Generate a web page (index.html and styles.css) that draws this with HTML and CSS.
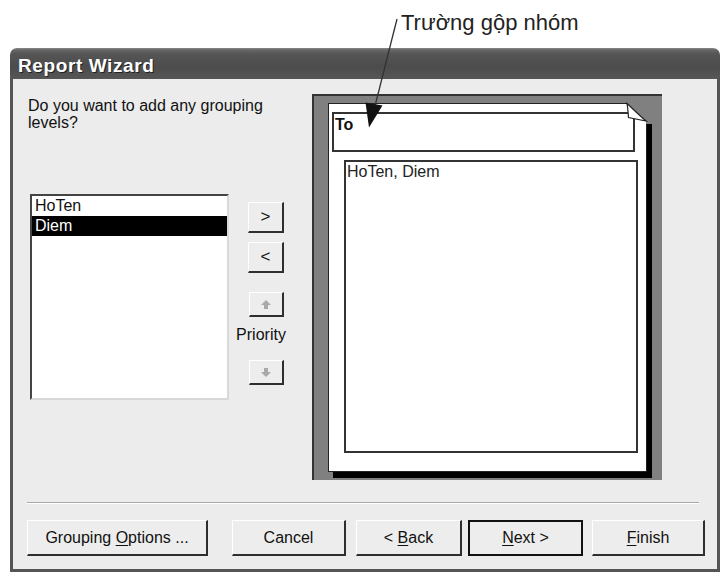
FILE: index.html
```html
<!DOCTYPE html>
<html>
<head>
<meta charset="utf-8">
<title>Report Wizard</title>
<link rel="stylesheet" href="styles.css">
</head>
<body>
<div class="top">
  <span class="callout">Trường gộp nhóm</span>
</div>
<svg class="arrow" viewBox="0 0 724 140" width="724" height="140">
  <line x1="397" y1="19" x2="375" y2="106" stroke="#333" stroke-width="1.3"/>
  <polygon points="365.5,102.5 382.5,105.5 369,127.5" fill="#111"/>
</svg>
<div class="window">
  <div class="titlebar">Report Wizard</div>
  <div class="body">
    <div class="main">
      <div class="left">
        <p class="question">Do you want to add any grouping levels?</p>
        <div class="pick">
          <div class="list">
            <div class="item">HoTen</div>
            <div class="item sel">Diem</div>
          </div>
          <div class="movers">
            <div class="btn mv"><span>&gt;</span></div>
            <div class="btn mv mv2"><span>&lt;</span></div>
            <div class="btn pr">
              <svg width="10" height="9" viewBox="0 0 10 9"><polygon points="5,0 10,5 7,5 7,9 3,9 3,5 0,5" fill="#a9a9a9"/></svg>
            </div>
            <div class="prio">Priority</div>
            <div class="btn pr pr2">
              <svg width="10" height="9" viewBox="0 0 10 9"><polygon points="5,9 10,4 7,4 7,0 3,0 3,4 0,4" fill="#a9a9a9"/></svg>
            </div>
          </div>
        </div>
      </div>
      <div class="preview">
        <div class="page">
          <div class="grp">To</div>
          <div class="detail">HoTen, Diem</div>
          <svg class="ear" width="31" height="24" viewBox="0 0 31 24">
            <polygon points="4,0 31,0 31,23 23,23 23,20 4,2.5" fill="#808080"/>
            <path d="M4,2.5 C5,7 5,12 5.5,16.5 L23,20 C16,14 9,7 4,2.5 Z" fill="#fff" stroke="#222" stroke-width="1.2"/>
          </svg>
        </div>
      </div>
    </div>
    <div class="sep"></div>
    <div class="actions">
      <div class="btn ab b-group"><span>Grouping <u>O</u>ptions ...</span></div>
      <div class="btn ab b-cancel"><span>Cancel</span></div>
      <div class="btn ab b-back"><span>&lt; <u>B</u>ack</span></div>
      <div class="btn ab b-next"><span><u>N</u>ext &gt;</span></div>
      <div class="btn ab b-finish"><span><u>F</u>inish</span></div>
    </div>
  </div>
</div>
</body>
</html>
```
FILE: styles.css
```css
html, body {
  margin: 0;
  padding: 0;
}
body {
  width: 724px;
  height: 580px;
  position: relative;
  overflow: hidden;
  background: #fff;
  font-family: "Liberation Sans", Arial, sans-serif;
  color: #111;
}
.top {
  height: 48px;
  box-sizing: border-box;
  padding: 10px 0 0 401px;
}
.callout {
  display: block;
  font-size: 22px;
  line-height: 26px;
  color: #222;
  white-space: nowrap;
}
.arrow {
  position: absolute;
  left: 0;
  top: 0;
  pointer-events: none;
  z-index: 5;
}
.window {
  margin-left: 10px;
  width: 710px;
}
.titlebar {
  height: 31px;
  box-sizing: border-box;
  border-radius: 7px 7px 0 0;
  background: linear-gradient(#8a8a8a 0, #666 2px, #555 6px, #4c4c4c 60%, #565656 100%);
  color: #fff;
  font-weight: bold;
  font-size: 19px;
  letter-spacing: 0.6px;
  line-height: 26px;
  padding: 5px 0 0 8px;
  text-shadow: 1px 1px 0 #222;
}
.body {
  height: 493px;
  box-sizing: border-box;
  border: 3px solid #555;
  border-top: 0;
  background: #ececec;
}
.main {
  display: flex;
  height: 401px;
  box-sizing: border-box;
  padding: 15px 0 0 15px;
}
.left {
  width: 284px;
}
.question {
  margin: 3px 0 0;
  width: 250px;
  font-size: 16px;
  line-height: 17px;
}
.pick {
  display: flex;
  margin-top: 63px;
}
.list {
  margin-left: 2px;
  width: 199px;
  height: 206px;
  box-sizing: border-box;
  background: #fff;
  border: 2px solid;
  border-color: #444 #d8d8d8 #d8d8d8 #444;
  font-size: 16px;
  line-height: 20px;
}
.item {
  padding-left: 3px;
}
.sel {
  background: #000;
  color: #fff;
}
.movers {
  margin-left: 7px;
  width: 60px;
  display: flex;
  flex-direction: column;
  align-items: center;
  padding-top: 8px;
}
.btn {
  box-sizing: border-box;
  background: #ededed;
  border-style: solid;
  border-width: 1px 2px 2px 1px;
  border-color: #fff #2e2e2e #2e2e2e #fff;
  display: flex;
  align-items: center;
  justify-content: center;
  color: #111;
  font-size: 16px;
  white-space: nowrap;
}
.mv {
  width: 36px;
  height: 31px;
  font-size: 17px;
}
.mv2 {
  margin-top: 9px;
}
.pr {
  width: 35px;
  height: 25px;
  margin-top: 19px;
}
.pr2 {
  margin-top: 17px;
}
.prio {
  margin-top: 9px;
  margin-right: 10px;
  font-size: 16px;
  line-height: 17px;
}
.preview {
  width: 350px;
  height: 386px;
  box-sizing: border-box;
  border-style: solid;
  border-width: 2px 0 0 2px;
  border-color: #333;
  background: #808080;
  padding: 7px 0 0 14px;
}
.page {
  position: relative;
  width: 319px;
  height: 369px;
  box-sizing: border-box;
  background: #fff;
  border: 1px solid #222;
  box-shadow: 5px 6px 0 #000;
}
.grp {
  margin: 8px 0 0 3px;
  width: 303px;
  height: 40px;
  box-sizing: border-box;
  border: 2px solid #333;
  padding: 2px 1px;
  font-weight: bold;
  font-size: 16px;
  line-height: 17px;
}
.detail {
  margin: 8px 0 0 15px;
  width: 294px;
  height: 293px;
  box-sizing: border-box;
  border: 2px solid #333;
  padding: 1px 1px;
  font-size: 16px;
  line-height: 17px;
  color: #222;
}
.ear {
  position: absolute;
  left: 294px;
  top: -3px;
  overflow: visible;
}
.sep {
  margin: 22px 18px 0 14px;
  border-top: 1px solid #aaa;
  border-bottom: 1px solid #fff;
}
.actions {
  display: flex;
  margin-top: 16px;
  padding-left: 14px;
  height: 36px;
}
.ab {
  height: 36px;
}
.b-group { width: 181px; }
.b-cancel { width: 114px; margin-left: 24px; }
.b-back { width: 106px; margin-left: 10px; }
.b-next { width: 115px; margin-left: 6px; border: 2px solid #111; }
.b-finish { width: 113px; margin-left: 9px; }
u {
  text-decoration: underline;
  text-underline-offset: 2px;
}
```
